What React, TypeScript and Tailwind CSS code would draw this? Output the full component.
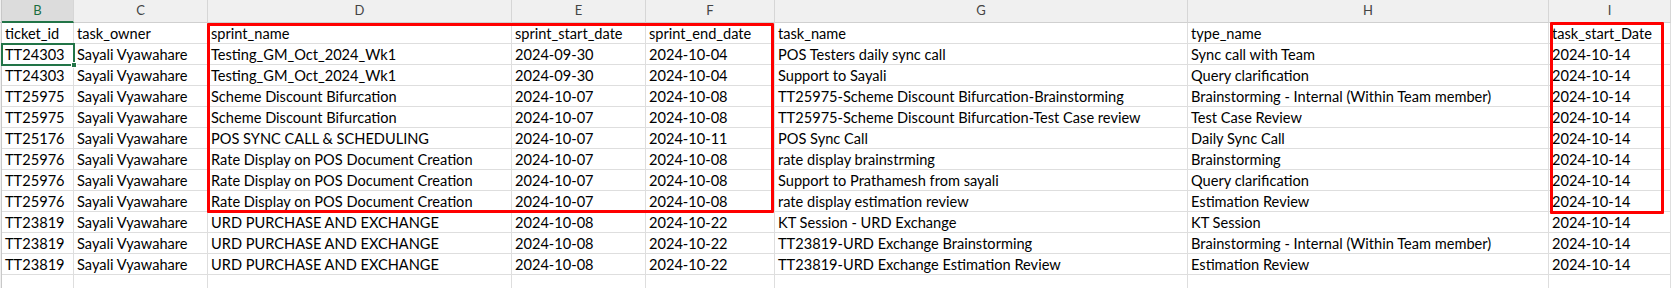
import React from 'react'

const COLS = ['B', 'C', 'D', 'E', 'F', 'G', 'H', 'I']

const HEAD = ['ticket_id', 'task_owner', 'sprint_name', 'sprint_start_date', 'sprint_end_date', 'task_name', 'type_name', 'task_start_Date']

const OWNER = 'Sayali Vyawahare'
const START = '2024-10-14'

const ROWS: string[][] = [
  ['TT24303', OWNER, 'Testing_GM_Oct_2024_Wk1', '2024-09-30', '2024-10-04', 'POS Testers daily sync call', 'Sync call with Team', START],
  ['TT24303', OWNER, 'Testing_GM_Oct_2024_Wk1', '2024-09-30', '2024-10-04', 'Support to Sayali', 'Query clarification', START],
  ['TT25975', OWNER, 'Scheme Discount Bifurcation', '2024-10-07', '2024-10-08', 'TT25975-Scheme Discount Bifurcation-Brainstorming', 'Brainstorming - Internal (Within Team member)', START],
  ['TT25975', OWNER, 'Scheme Discount Bifurcation', '2024-10-07', '2024-10-08', 'TT25975-Scheme Discount Bifurcation-Test Case review', 'Test Case Review', START],
  ['TT25176', OWNER, 'POS SYNC CALL & SCHEDULING', '2024-10-07', '2024-10-11', 'POS Sync Call', 'Daily Sync Call', START],
  ['TT25976', OWNER, 'Rate Display on POS Document Creation', '2024-10-07', '2024-10-08', 'rate display brainstrming', 'Brainstorming', START],
  ['TT25976', OWNER, 'Rate Display on POS Document Creation', '2024-10-07', '2024-10-08', 'Support to Prathamesh from sayali', 'Query clarification', START],
  ['TT25976', OWNER, 'Rate Display on POS Document Creation', '2024-10-07', '2024-10-08', 'rate display estimation review', 'Estimation Review', START],
  ['TT23819', OWNER, 'URD PURCHASE AND EXCHANGE', '2024-10-08', '2024-10-22', 'KT Session - URD Exchange', 'KT Session', START],
  ['TT23819', OWNER, 'URD PURCHASE AND EXCHANGE', '2024-10-08', '2024-10-22', 'TT23819-URD Exchange Brainstorming', 'Brainstorming - Internal (Within Team member)', START],
  ['TT23819', OWNER, 'URD PURCHASE AND EXCHANGE', '2024-10-08', '2024-10-22', 'TT23819-URD Exchange Estimation Review', 'Estimation Review', START],
]

const grid = 'grid grid-cols-[2px_72px_134px_304px_134px_129px_413px_361px_1fr]'

function Row({ cells, active = -1 }: { cells: string[]; active?: number }) {
  return (
    <div className={`${grid} h-[21px]`}>
      <div className="border-r border-[#c8c8c8] bg-[#f0f0f0]" />
      {cells.map((c, i) => (
        <div
          key={i}
          className={[
            'relative border-r border-b border-[#dedede] pl-[3px] pt-[1px] h-[21px] leading-[20px] whitespace-nowrap text-black text-[14.6px]',
            i === active ? 'outline-2 -outline-offset-1 outline-[#227447] z-10' : 'overflow-hidden',
          ].join(' ')}
        >
          {c}
          {i === active && (
            <span className="absolute -right-[4px] -bottom-[4px] w-[6px] h-[6px] bg-[#227447] border border-white" />
          )}
        </div>
      ))}
    </div>
  )
}

export default function App() {
  return (
    <div className="relative w-[1671px] h-[288px] overflow-hidden bg-white font-['Lato','Open_Sans',sans-serif]">
      {/* ── Column letters ─────────────────────────────────────────── */}
      <div className={`${grid} h-[23px] bg-[#f0f0f0]`}>
        <div className="border-r border-b border-[#c8c8c8]" />
        {COLS.map((l, i) => (
          <div
            key={l}
            className={[
              'border-r border-[#d6d6d6] flex items-center justify-center text-[13px]',
              i === 0
                ? 'bg-[#dcdcdc] text-[#1b6e3f] border-b-2 border-b-[#227447]'
                : 'text-[#444] border-b border-b-[#d0d0d0]',
            ].join(' ')}
          >
            {l}
          </div>
        ))}
      </div>

      {/* ── Sheet body ─────────────────────────────────────────────── */}
      <Row cells={HEAD} />
      {ROWS.map((r, i) => <Row key={i} cells={r} active={i === 0 ? 0 : -1} />)}
      <Row cells={['', '', '', '', '', '', '', '']} />

      {/* ── Red highlight boxes drawn over the sheet ───────────────── */}
      <div className="absolute left-[207px] top-[23px] w-[567px] h-[190px] border-[3px] border-[#ff0000] rounded-[1px] z-20" />
      <div className="absolute left-[1550px] top-[22px] w-[114px] h-[192px] border-[3px] border-[#ff0000] rounded-[1px] z-20" />
    </div>
  )
}
